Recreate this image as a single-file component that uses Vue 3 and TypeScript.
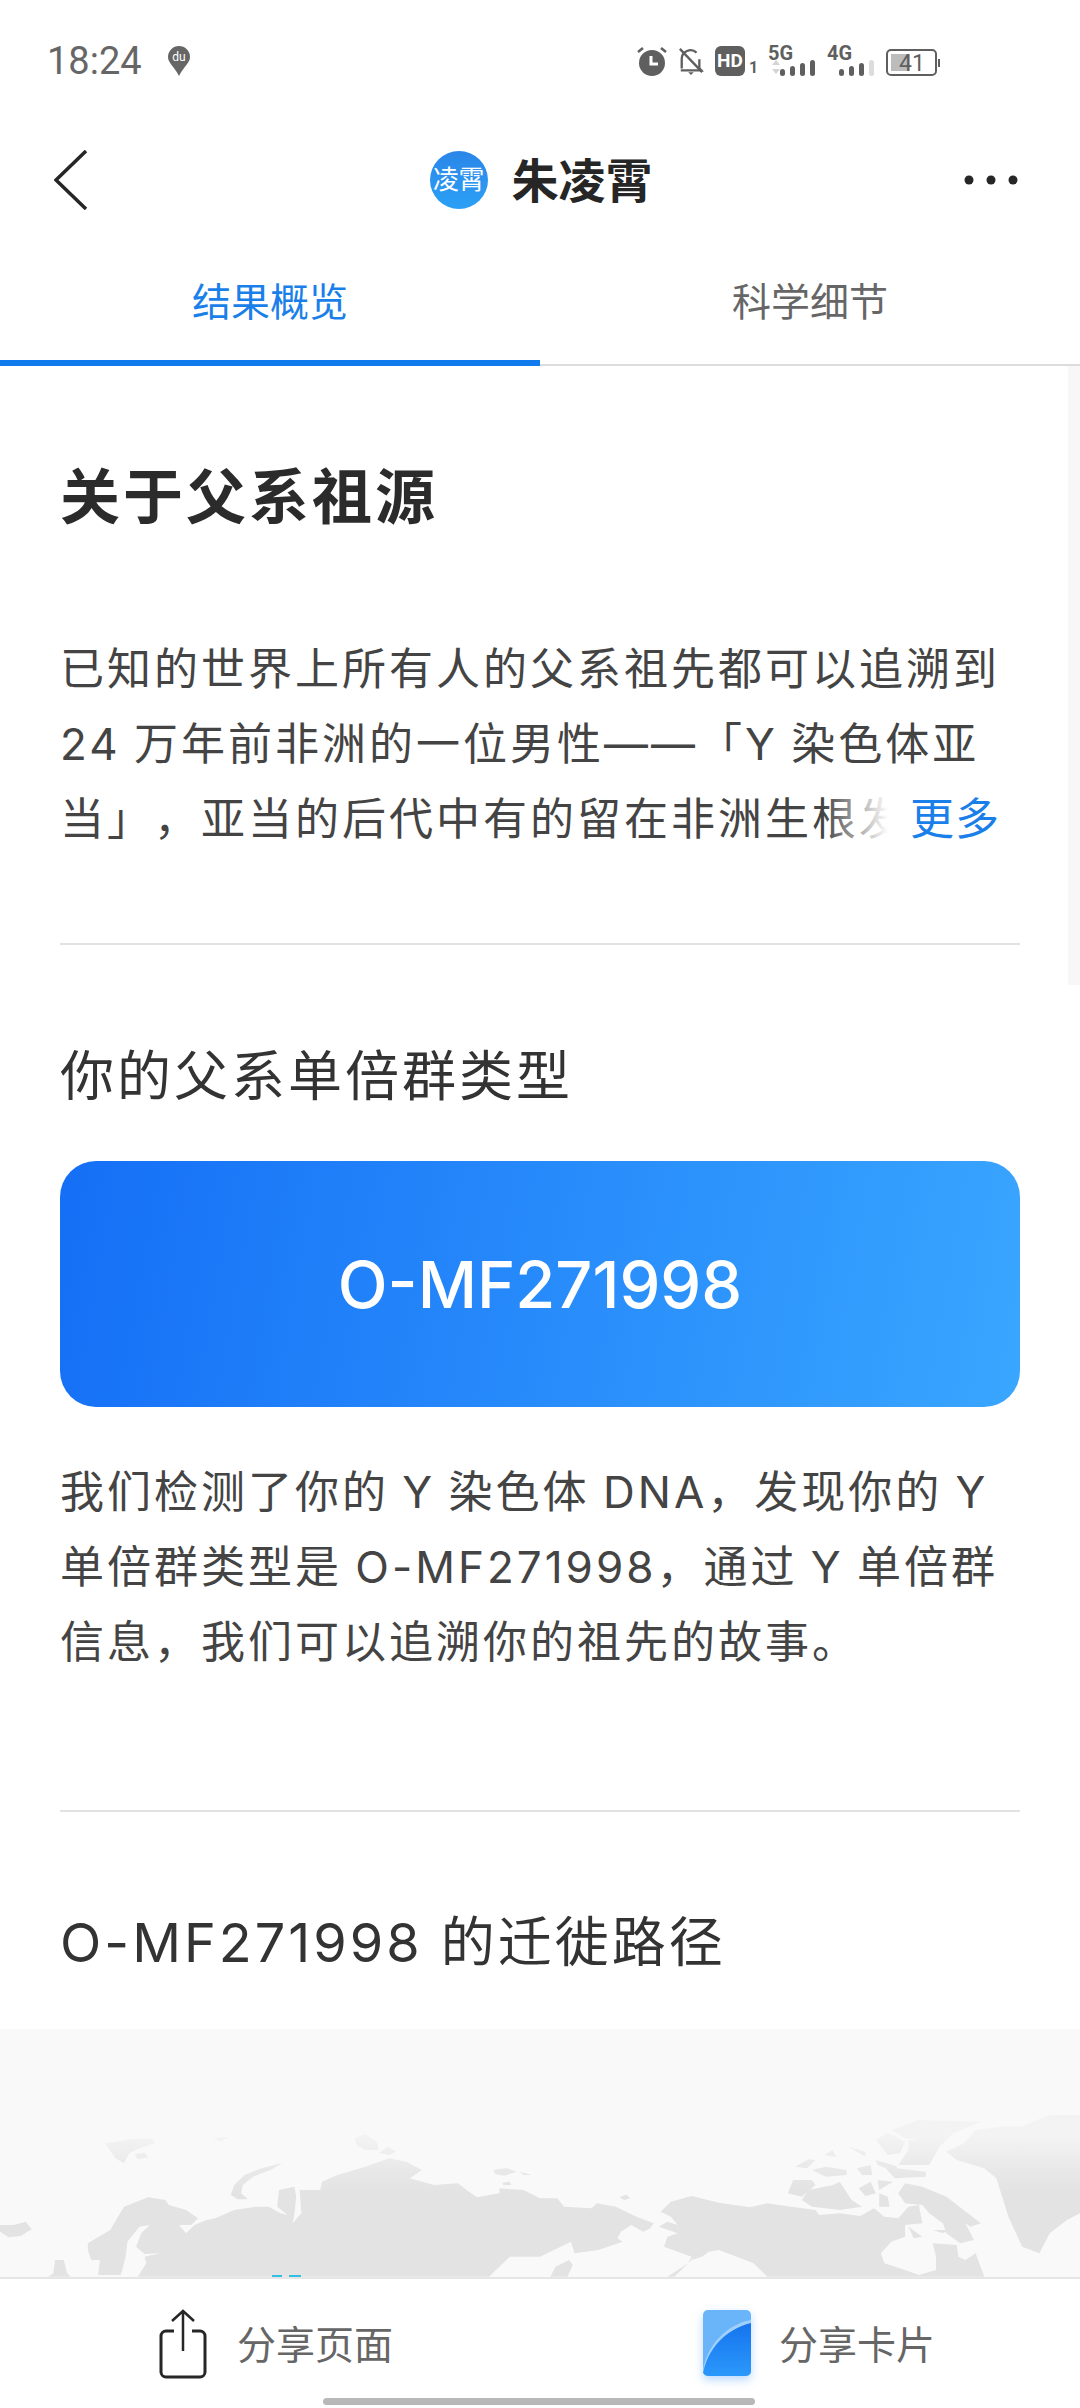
<script setup lang="ts">
const introLines = [
  '已知的世界上所有人的父系祖先都可以追溯到',
  '24 万年前非洲的一位男性——「Y 染色体亚',
  '当」，亚当的后代中有的留在非洲生根发',
];

const detailLines = [
  '我们检测了你的 Y 染色体 DNA，发现你的 Y',
  '单倍群类型是 O-MF271998，通过 Y 单倍群',
  '信息，我们可以追溯你的祖先的故事。',
];

// land shapes, in zoom crop coordinates of the two map halves
const landLeft = [
  'M0 345L40 345 75 335 92 358 60 378 25 382 0 365Z',
  'M305 100L380 88 440 85 450 100 405 115 375 130 360 160 335 145Z',
  'M390 132L420 128 430 142 400 148Z',
  'M620 85L665 80 640 95Z',
  'M820 158L760 175 710 195 680 225 670 255 690 268 720 268 700 250 705 225 735 200 790 178Z',
  'M1030 85L1060 72 1095 95 1100 120 1060 120 1035 105Z',
  'M1100 128L1125 110 1150 125 1130 135Z',
  'M1432 180L1470 174 1500 185 1465 197 1438 192Z',
  'M1510 185L1545 195 1520 195Z',
  'M1458 218L1480 215 1485 225 1462 226Z',
  'M255 400L320 360 360 290 430 262 480 270 490 285 540 300 575 325 555 345 520 345 540 370 565 345 600 330 625 325 680 300 745 290 780 290 815 310 835 315 805 290 810 240 855 230 860 260 855 310 850 340 875 310 870 240 930 240 935 215 980 195 1060 170 1130 145 1180 155 1225 180 1190 205 1260 225 1330 220 1355 240 1385 262 1450 250 1450 235 1520 240 1568 265L1568 440 1480 440 1420 500 400 500 425 460 420 440 465 430 420 432 395 410 410 370 435 345 405 350 370 395 365 440 355 480 350 495 285 495 290 450 265 450 255 420Z',
  'M155 490L160 450 185 450 195 490 205 500 140 500Z',
];

const landRight = [
  'M0 265L50 265 70 290 150 295 165 280 220 290 280 320 330 340 320 355 300 365 265 345 235 365 225 385 240 395 170 420 100 430 90 395 60 410 0 440Z',
  'M30 500L45 470 85 450 95 465 80 500Z',
  'M230 262L250 254 262 264 245 270Z',
  'M350 305L380 275 440 258 520 278 610 292 660 280 730 290 800 300 810 315 870 310 930 318 970 295 1000 320 1040 325 1070 290 1100 285 1110 340 1060 345 1060 380 1020 395 990 430 1000 460 1060 480 1100 495 1150 480 1150 440 1140 400 1210 405 1215 440 1235 450 1265 430 1290 500 660 500 620 460 520 420 490 425 470 440 440 450 390 500 370 500 430 460 440 440 400 425 360 410 370 380 400 370 345 350 370 335 400 345 380 320Z',
  'M1040 250L1060 220 1110 230 1180 260 1230 300 1280 340 1250 350 1235 340 1260 390 1220 400 1180 370 1170 340 1130 310 1110 285 1060 280Z',
  'M720 250L735 210 790 210 800 225 760 260Z',
  'M780 240L850 225 870 215 905 270 935 290 870 300 790 290 760 270Z',
  'M790 180L830 170 890 180 890 195 830 200Z',
  'M740 170L780 148 800 150 775 175Z',
  'M825 135L850 120 860 140Z',
  'M895 110L945 125 945 140Z',
  'M920 175L960 165 965 195 935 195Z',
  'M925 235L960 215 975 250 945 258Z',
  'M980 210L1025 215 985 240Z',
  'M985 250L1010 260 1015 290 985 290Z',
  'M1000 170L1120 185 1120 200 1030 205Z',
  'M975 150L1040 170 1020 180 980 165Z',
  'M975 90L1010 68 1060 95 1045 130 1010 135Z',
  'M1020 60L1100 30 1280 35 1200 70 1160 110 1130 165 1040 165 1070 120 1070 90 1100 90 1060 85Z',
  'M1420 40L1480 15 1568 15 1568 310 1530 330 1480 370 1450 430 1400 410 1360 320 1345 270 1325 205 1290 175 1210 150 1180 125 1230 100 1265 60 1340 50 1400 50Z',
  'M1070 350L1110 380 1085 385Z',
  'M1140 360L1190 360 1170 370Z',
  'M1140 310L1160 310 1165 325 1150 325Z',
];
</script>

<template>
  <div class="page">
    <div class="status">
      <span class="time">18:24</span>
      <svg class="pin" width="22" height="30" viewBox="0 0 22 30">
        <path d="M11 0a11 11 0 0 1 11 11c0 6-6 9-11 19C6 20 0 17 0 11A11 11 0 0 1 11 0Z" fill="#666" />
        <text x="11" y="15" text-anchor="middle" font-size="12" fill="#fff" font-family="Roboto, sans-serif">du</text>
      </svg>
      <div class="status-right">
        <svg width="30" height="30" viewBox="0 0 30 30">
          <circle cx="15" cy="17" r="13" fill="#5f5f5f" />
          <path d="M1 6l5-4M29 6l-5-4" stroke="#5f5f5f" stroke-width="2.5" />
          <path d="M14 10v8h7" fill="none" stroke="#fff" stroke-width="3" />
        </svg>
        <svg width="26" height="30" viewBox="0 0 28 30">
          <path d="M4 23V13a9.500 9.500 0 0 1 16-7M23 13v10l2 2H3" fill="none" stroke="#5f5f5f" stroke-width="2.500" />
          <path d="M2 2l24 25" stroke="#5f5f5f" stroke-width="2.500" />
          <path d="M11 27h6l-3 3Z" fill="#5f5f5f" />
        </svg>
        <div class="hd-wrap">
          <span class="hd">HD</span>
          <span class="sim">1</span>
        </div>
        <svg class="net" width="48" height="36" viewBox="0 -6 48 36">
          <text x="0" y="14" font-size="20" font-weight="700" fill="#5f5f5f" font-family="Roboto, sans-serif">5G</text>
          <path d="M4 19l4-5 4 5ZM4 23h8l-4 5Z" fill="#d4d4d4" />
          <rect x="12" y="23" width="5" height="7" rx="2.500" fill="#5f5f5f" />
          <rect x="22" y="20" width="5" height="10" rx="2.500" fill="#5f5f5f" />
          <rect x="32" y="17" width="5" height="13" rx="2.500" fill="#5f5f5f" />
          <rect x="42" y="14" width="5" height="16" rx="2.500" fill="#5f5f5f" />
        </svg>
        <svg class="net" width="48" height="36" viewBox="0 -6 48 36">
          <text x="0" y="14" font-size="20" font-weight="700" fill="#5f5f5f" font-family="Roboto, sans-serif">4G</text>
          <rect x="12" y="23" width="5" height="7" rx="2.500" fill="#5f5f5f" />
          <rect x="22" y="20" width="5" height="10" rx="2.500" fill="#5f5f5f" />
          <rect x="32" y="17" width="5" height="13" rx="2.500" fill="#5f5f5f" />
          <rect x="42" y="14" width="5" height="16" rx="2.500" fill="#dcdcdc" />
        </svg>
        <svg class="battery" width="54" height="36" viewBox="0 0 54 36">
          <rect x="1" y="4" width="49" height="25" rx="4" fill="none" stroke="#5f5f5f" stroke-width="2" />
          <rect x="5" y="8" width="19" height="17" fill="#bcbcbc" />
          <rect x="52" y="13" width="2" height="8" fill="#5f5f5f" />
          <text x="26" y="25" text-anchor="middle" font-size="23" fill="#5f5f5f" font-family="Roboto, sans-serif">41</text>
        </svg>
      </div>
    </div>

    <header class="nav">
      <svg class="back" width="34" height="60" viewBox="0 0 34 60">
        <path d="M32 1L2 30l30 29" fill="none" stroke="#262626" stroke-width="3.500" />
      </svg>
      <div class="who">
        <span class="avatar">凌霄</span>
        <span class="name">朱凌霄</span>
      </div>
      <svg class="more" width="54" height="10" viewBox="0 0 54 10">
        <circle cx="5" cy="5" r="4.500" fill="#262626" />
        <circle cx="27" cy="5" r="4.500" fill="#262626" />
        <circle cx="49" cy="5" r="4.500" fill="#262626" />
      </svg>
    </header>

    <nav class="tabs">
      <div class="tab active">结果概览</div>
      <div class="tab">科学细节</div>
    </nav>

    <main class="content">
      <div class="scrollbar"></div>
      <section class="block">
        <h1 class="title">关于父系祖源</h1>
        <div class="intro">
          <p v-for="line in introLines" :key="line" class="line">{{ line }}</p>
          <span class="more-link">更多</span>
        </div>
        <hr class="rule first" />
        <h2 class="heading">你的父系单倍群类型</h2>
        <div class="hap-card">O-MF271998</div>
        <div class="detail">
          <p v-for="line in detailLines" :key="line" class="line">{{ line }}</p>
        </div>
        <hr class="rule second" />
        <h2 class="heading route">O-MF271998 的迁徙路径</h2>
      </section>

      <div class="map">
        <svg width="1080" height="248" viewBox="0 0 1080 248">
          <defs>
            <linearGradient id="land" x1="0" y1="81" x2="0" y2="248" gradientUnits="userSpaceOnUse">
              <stop offset="0" stop-color="#f3f3f3" />
              <stop offset="0.6" stop-color="#e8e8e8" />
              <stop offset="1" stop-color="#e3e3e3" />
            </linearGradient>
          </defs>
          <g fill="url(#land)">
            <path v-for="d in landLeft" :key="d" :d="d" transform="translate(0 81) scale(0.3444 0.3333)" />
            <path v-for="d in landRight" :key="d" :d="d" transform="translate(540 81) scale(0.3444 0.3333)" />
          </g>
          <path d="M272 247h10M289 247h12" stroke="#35bfe2" stroke-width="2" />
        </svg>
      </div>
    </main>

    <footer class="bottom">
      <div class="action first-action">
        <svg width="48" height="70" viewBox="0 0 48 70">
          <path d="M15 22H7a5 5 0 0 0-5 5v36a5 5 0 0 0 5 5h34a5 5 0 0 0 5-5V27a5 5 0 0 0-5-5h-8" fill="none" stroke="#262626" stroke-width="3" />
          <path d="M24 42V2M13 12L24 2l11 10" fill="none" stroke="#262626" stroke-width="2.500" />
        </svg>
        <span>分享页面</span>
      </div>
      <div class="action second-action">
        <svg class="card-icon" width="48" height="68" viewBox="0 0 48 68">
          <rect width="48" height="66" rx="5" fill="#6ab4fa" />
          <path d="M0 60C4 36 22 15 48 10v51a5 5 0 0 1-5 5H5a5 5 0 0 1-5-5Z" fill="#9fd0fb" />
          <path d="M0 64C4 40 22 19 48 13v48a5 5 0 0 1-5 5H5a5 5 0 0 1-5-5Z" fill="url(#cardBlue)" />
          <defs>
            <linearGradient id="cardBlue" x1="0" y1="0" x2="0" y2="1">
              <stop offset="0" stop-color="#1674ee" />
              <stop offset="1" stop-color="#2b98fb" />
            </linearGradient>
          </defs>
        </svg>
        <span>分享卡片</span>
      </div>
      <div class="home-bar"></div>
    </footer>
  </div>
</template>

<style>
html,
body {
  margin: 0;
  background: #fff;
}
</style>

<style scoped>
.page {
  width: 1080px;
  height: 2408px;
  display: flex;
  flex-direction: column;
  overflow: hidden;
  background: #fff;
  font-family: Inter, "Noto Sans CJK SC", "Noto Sans", sans-serif;
  text-spacing-trim: space-all;
}

.status {
  height: 120px;
  flex: none;
  display: flex;
  align-items: center;
  padding: 2px 140px 0 47px;
  box-sizing: border-box;
}

.time {
  font-family: Roboto, sans-serif;
  font-size: 38px;
  color: #666;
}

.pin {
  margin-left: 26px;
}

.status-right {
  margin-left: auto;
  display: flex;
  align-items: center;
  gap: 11px;
}

.net {
  margin-top: -6px;
}

.battery {
  margin-bottom: -6px;
}

.hd-wrap {
  width: 42px;
  display: flex;
  align-items: flex-end;
  gap: 4px;
}

.hd {
  width: 30px;
  height: 30px;
  flex: none;
  border-radius: 6px;
  background: #5f5f5f;
  color: #fff;
  font: 700 19px/30px Roboto, sans-serif;
  text-align: center;
}

.sim {
  font: 700 16px/16px Roboto, sans-serif;
  color: #5f5f5f;
}

.nav {
  height: 120px;
  flex: none;
  display: flex;
  align-items: center;
  justify-content: space-between;
  padding: 0 62px 0 54px;
  box-sizing: border-box;
}

.who {
  display: flex;
  align-items: center;
  gap: 24px;
  margin-left: 30px;
}

.avatar {
  width: 58px;
  height: 58px;
  border-radius: 50%;
  background: linear-gradient(180deg, #2a86e8, #2ba0f5);
  color: #fff;
  font-size: 26px;
  line-height: 58px;
  text-align: center;
  white-space: nowrap;
  letter-spacing: -0.5px;
}

.name {
  font-size: 47px;
  font-weight: 700;
  color: #262626;
  margin-bottom: 6px;
}

.tabs {
  height: 126px;
  flex: none;
  display: grid;
  grid-template-columns: 540px 540px;
  box-sizing: border-box;
  border-bottom: 2px solid #dcdcdc;
}

.tab {
  font-size: 39px;
  color: #666;
  text-align: center;
  line-height: 124px;
  height: 126px;
  box-sizing: border-box;
}

.tab.active {
  color: #1a7fe8;
  border-bottom: 6px solid #0f7bec;
}

.content {
  flex: 1;
  min-height: 0;
  position: relative;
  overflow: hidden;
  display: flex;
  flex-direction: column;
}

.scrollbar {
  position: absolute;
  top: -114px;
  right: 0;
  width: 12px;
  height: 733px;
  background: #f7f7f7;
}

.block {
  padding: 91px 60px 0;
}

.title {
  margin: 0;
  font-size: 60px;
  line-height: 80px;
  font-weight: 700;
  letter-spacing: 3px;
  color: #2b2b2b;
}

.intro {
  position: relative;
  margin-top: 95px;
  color: #444;
}

.detail {
  margin-top: 48px;
  color: #444;
}

.line {
  margin: 0;
  font-size: 44px;
  line-height: 75px;
  height: 75px;
  letter-spacing: 3px;
  word-spacing: -2px;
  white-space: nowrap;
}

.more-link {
  position: absolute;
  right: 20px;
  bottom: 0;
  line-height: 75px;
  font-size: 44px;
  letter-spacing: 1px;
  color: #1a7fe8;
  padding-left: 87px;
  background: linear-gradient(90deg, rgba(255, 255, 255, 0), #fff 65px);
}

.rule {
  margin: 0;
  border: 0;
  height: 2px;
  background: #e2e2e2;
}

.rule.first {
  margin-top: 86px;
}

.rule.second {
  margin-top: 130px;
}

.heading {
  margin: 97px 0 0;
  font-size: 54px;
  line-height: 70px;
  font-weight: 400;
  letter-spacing: 3px;
  color: #333;
}

.heading.route {
  margin-top: 96px;
}

.hap-card {
  margin-top: 49px;
  height: 246px;
  border-radius: 36px;
  background: linear-gradient(100deg, #156ff6, #39a6ff);
  color: #fff;
  font-size: 65px;
  font-weight: 500;
  line-height: 248px;
  text-align: center;
}

.map {
  margin-top: 51px;
  height: 248px;
  flex: none;
  background: #f9f9f9;
}

.map svg {
  display: block;
}

.bottom {
  height: 131px;
  flex: none;
  box-sizing: border-box;
  border-top: 2px solid #e6e6e6;
  display: grid;
  grid-template-columns: 540px 540px;
  position: relative;
}

.action {
  display: flex;
  align-items: center;
  gap: 30px;
  font-size: 39px;
  color: #666;
}

.action span {
  margin-bottom: 4px;
}

.first-action {
  padding-left: 159px;
}

.second-action {
  padding-left: 163px;
  gap: 28px;
}

.card-icon {
  filter: drop-shadow(0 4px 5px rgba(30, 130, 240, 0.3));
}

.home-bar {
  position: absolute;
  left: 323px;
  bottom: 3px;
  width: 432px;
  height: 7px;
  border-radius: 4px;
  background: #b8b8b8;
}
</style>
